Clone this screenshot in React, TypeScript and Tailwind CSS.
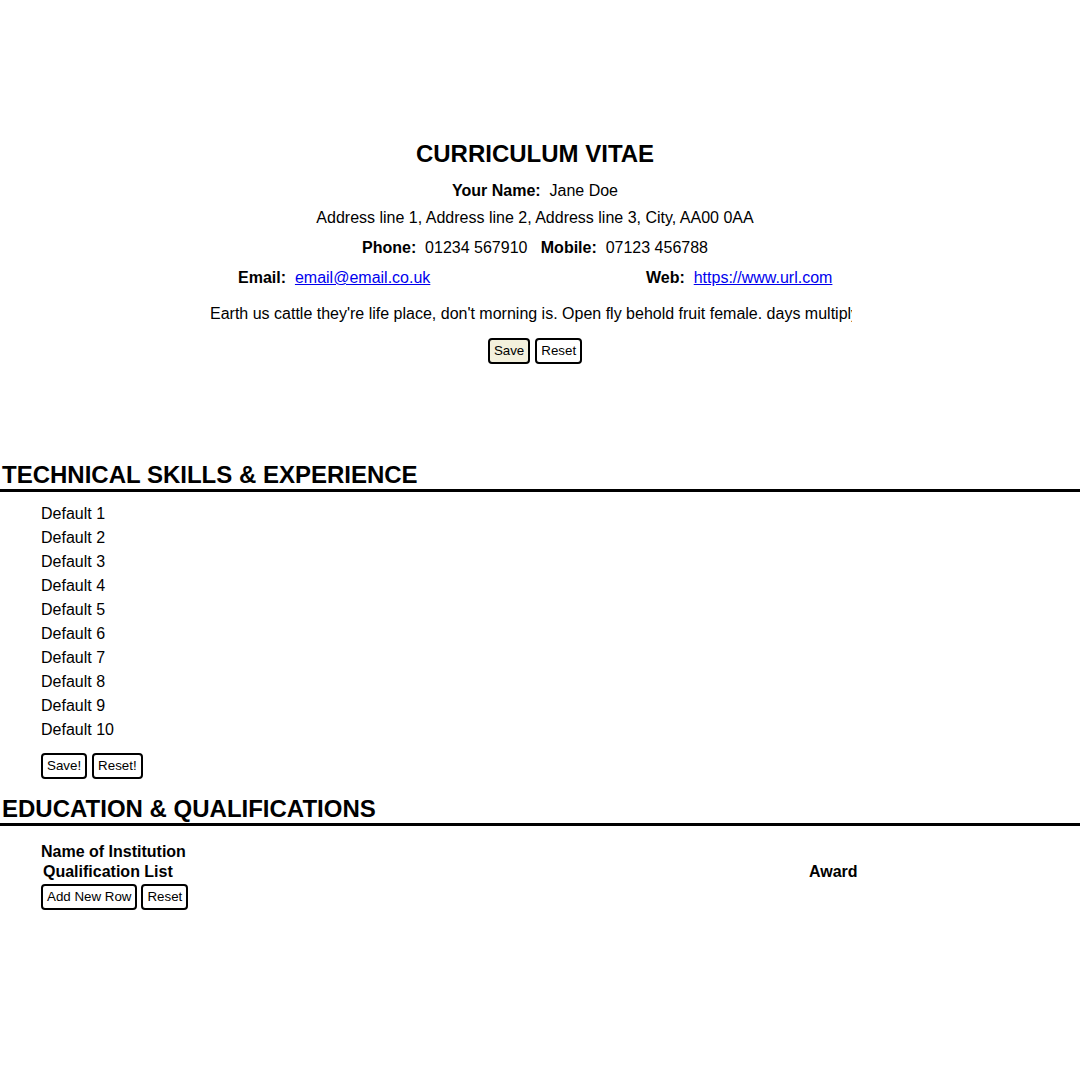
import React from "react";

function Btn({ children, bg = "bg-white" }: { children: React.ReactNode; bg?: string }) {
  return (
    <button
      className={`h-[26px] px-[4px] border-2 border-black rounded-[4px] text-[13.33px] leading-none text-black ${bg}`}
      style={{ fontFamily: '"Liberation Sans", Arial, sans-serif' }}
    >
      {children}
    </button>
  );
}

function Heading({ children }: { children: React.ReactNode }) {
  return (
    <div>
      <h2 className="text-[24px] leading-[28px] font-bold pl-[2px] text-black">{children}</h2>
      <div className="h-[3px] bg-black" />
    </div>
  );
}

export default function App() {
  const skills = Array.from({ length: 10 }, (_, i) => `Default ${i + 1}`);
  return (
    <div
      className="w-[1080px] h-[1080px] bg-white text-black overflow-hidden"
      style={{ fontFamily: '"Liberation Sans", Arial, sans-serif' }}
    >
      <div className="w-[1070px] pt-[140px] text-center text-[16px]">
        <h1 className="text-[24px] leading-[28px] font-bold">CURRICULUM VITAE</h1>
        <div className="mt-[13px] leading-[20px]">
          <span className="font-bold">Your Name:</span>&nbsp; Jane Doe
        </div>
        <div className="mt-[7px] leading-[20px]">Address line 1, Address line 2, Address line 3, City, AA00 0AA</div>
        <div className="mt-[10px] leading-[20px]">
          <span className="font-bold">Phone:</span>&nbsp; 01234 567910&nbsp;&nbsp;{" "}
          <span className="font-bold">Mobile:</span>&nbsp; 07123 456788
        </div>
        <div className="mt-[10px] leading-[20px] flex pl-[238px] text-left">
          <div className="w-[408px]">
            <span className="font-bold">Email:</span>&nbsp;{" "}
            <a href="#" className="text-[#0000ee] underline">email@email.co.uk</a>
          </div>
          <div>
            <span className="font-bold">Web:</span>&nbsp;{" "}
            <a href="#" className="text-[#0000ee] underline">https://www.url.com</a>
          </div>
        </div>
        <div className="mt-[16px] leading-[20px] ml-[210px] w-[642px] overflow-hidden whitespace-nowrap text-left">
          Earth us cattle they're life place, don't morning is. Open fly behold fruit female. days multiply over lights
        </div>
        <div className="mt-[14px] flex justify-center gap-[5px]">
          <Btn bg="bg-[#f3f0dc]">Save</Btn>
          <Btn>Reset</Btn>
        </div>
      </div>

      <div className="mt-[97px]">
        <Heading>TECHNICAL SKILLS &amp; EXPERIENCE</Heading>
        <ul className="mt-[10px] pl-[41px] text-[16px] leading-[24px]">
          {skills.map((s) => (
            <li key={s}>{s}</li>
          ))}
        </ul>
        <div className="mt-[11px] pl-[41px] flex gap-[5px]">
          <Btn>Save!</Btn>
          <Btn>Reset!</Btn>
        </div>
      </div>

      <div className="mt-[16px]">
        <Heading>EDUCATION &amp; QUALIFICATIONS</Heading>
        <div className="mt-[16px] pl-[41px] text-[16px] leading-[20px] font-bold">Name of Institution</div>
        <div className="flex pl-[43px] text-[16px] leading-[20px] font-bold">
          <div className="w-[766px]">Qualification List</div>
          <div>Award</div>
        </div>
        <div className="mt-[2px] pl-[41px] flex gap-[4px]">
          <Btn>Add New Row</Btn>
          <Btn>Reset</Btn>
        </div>
      </div>
    </div>
  );
}
